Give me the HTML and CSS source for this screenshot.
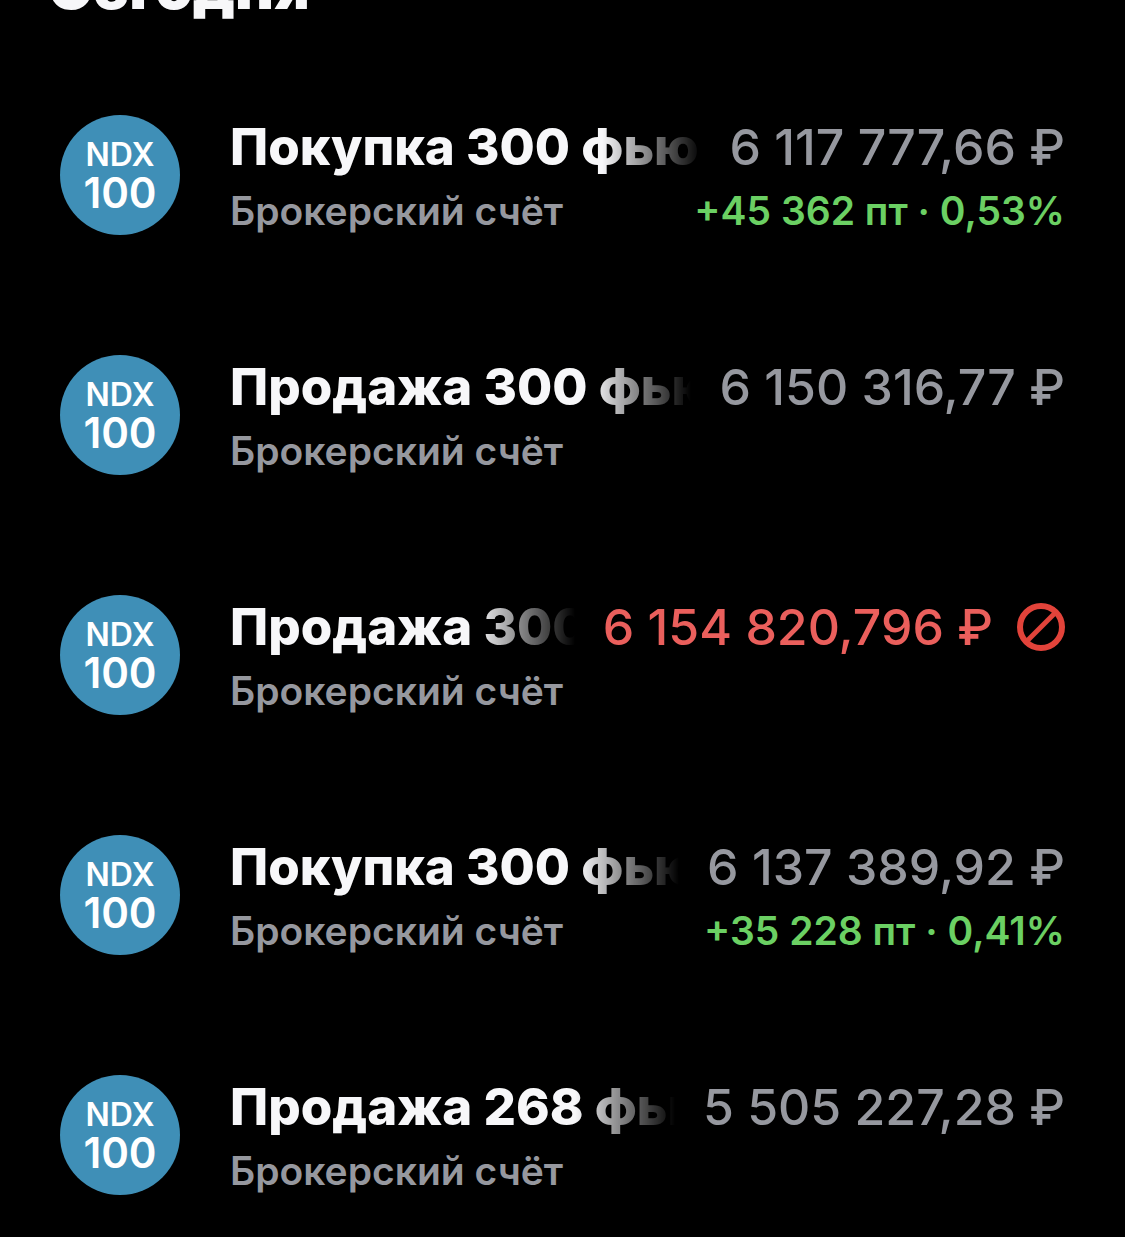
FILE: index.html
```html
<!DOCTYPE html>
<html lang="ru">
<head>
  <meta charset="UTF-8">
  <meta name="viewport" content="width=device-width, initial-scale=1">
  <title>Операции</title>
  <link rel="stylesheet" href="styles.css">
</head>
<body>

  <main class="history">
    <h1>Сегодня</h1>

    <ul class="operations">
      <li class="operation">
        <div class="logo"><span class="logo-top">NDX</span><span class="logo-bottom">100</span></div>
        <div class="info">
          <div class="row">
            <h2 class="title">Покупка 300 фью</h2>
            <span class="sum">6 117 777,66 ₽</span>
          </div>
          <div class="row row-sub">
            <span class="account">Брокерский счёт</span>
            <span class="profit">+45 362 пт · 0,53%</span>
          </div>
        </div>
      </li>

      <li class="operation">
        <div class="logo"><span class="logo-top">NDX</span><span class="logo-bottom">100</span></div>
        <div class="info">
          <div class="row">
            <h2 class="title">Продажа 300 фью</h2>
            <span class="sum">6 150 316,77 ₽</span>
          </div>
          <div class="row row-sub">
            <span class="account">Брокерский счёт</span>
          </div>
        </div>
      </li>

      <li class="operation">
        <div class="logo"><span class="logo-top">NDX</span><span class="logo-bottom">100</span></div>
        <div class="info">
          <div class="row">
            <h2 class="title">Продажа 300</h2>
            <span class="sum sum-rejected">6 154 820,796 ₽</span>
            <svg class="rejected-icon" viewBox="0 0 48 48" role="img" aria-label="Отклонено">
              <circle cx="24" cy="24" r="21"/>
              <path d="M9 39 39 9"/>
            </svg>
          </div>
          <div class="row row-sub">
            <span class="account">Брокерский счёт</span>
          </div>
        </div>
      </li>

      <li class="operation">
        <div class="logo"><span class="logo-top">NDX</span><span class="logo-bottom">100</span></div>
        <div class="info">
          <div class="row">
            <h2 class="title">Покупка 300 фью</h2>
            <span class="sum">6 137 389,92 ₽</span>
          </div>
          <div class="row row-sub">
            <span class="account">Брокерский счёт</span>
            <span class="profit">+35 228 пт · 0,41%</span>
          </div>
        </div>
      </li>

      <li class="operation">
        <div class="logo"><span class="logo-top">NDX</span><span class="logo-bottom">100</span></div>
        <div class="info">
          <div class="row">
            <h2 class="title">Продажа 268 фью</h2>
            <span class="sum">5 505 227,28 ₽</span>
          </div>
          <div class="row row-sub">
            <span class="account">Брокерский счёт</span>
          </div>
        </div>
      </li>
    </ul>
  </main>

</body>
</html>
```
FILE: styles.css
```css
* {
  box-sizing: border-box;
}

body {
  margin: 0;
  background-color: #000;
  color: #f7f7f9;
  font-family: Inter, Roboto, sans-serif;
}

.history {
  overflow: hidden;
}

h1 {
  margin: -49px 48px 0;
  font-size: 60px;
  line-height: 72px;
  font-weight: 900;
}

.operations {
  margin: 0;
  padding: 32px 60px 0;
  list-style: none;
}

.operation {
  display: flex;
  align-items: center;
  gap: 50px;
  height: 240px;
}

.logo {
  display: flex;
  flex: none;
  flex-direction: column;
  align-items: center;
  justify-content: center;
  width: 120px;
  height: 120px;
  padding-top: 2px;
  border-radius: 50%;
  background-color: #3f8fb7;
  color: #fff;
  font-weight: 600;
}

.logo-top {
  font-size: 32px;
  line-height: 34px;
}

.logo-bottom {
  font-size: 42px;
  line-height: 42px;
}

.info {
  flex: 1;
  min-width: 0;
  padding-top: 7px;
}

.row {
  display: flex;
  align-items: center;
  height: 64px;
}

.row-sub {
  justify-content: space-between;
  font-size: 39px;
  font-weight: 600;
}

.title {
  flex: 1;
  min-width: 0;
  margin: 0 28px 0 0;
  overflow: hidden;
  font-size: 51px;
  font-weight: 800;
  line-height: 64px;
  white-space: nowrap;
  mask-image: linear-gradient(to left, transparent, #000 100px);
}

.sum {
  color: #96989f;
  font-size: 50px;
  font-weight: 500;
  white-space: nowrap;
}

.sum-rejected {
  color: #ea5f5c;
}

.rejected-icon {
  flex: none;
  width: 48px;
  height: 48px;
  margin-left: 24px;
  fill: none;
  stroke: #e2433a;
  stroke-width: 6;
}

.rejected-icon path {
  stroke-width: 5;
}

.account {
  color: #96989f;
}

.profit {
  color: #6bd063;
}
```
